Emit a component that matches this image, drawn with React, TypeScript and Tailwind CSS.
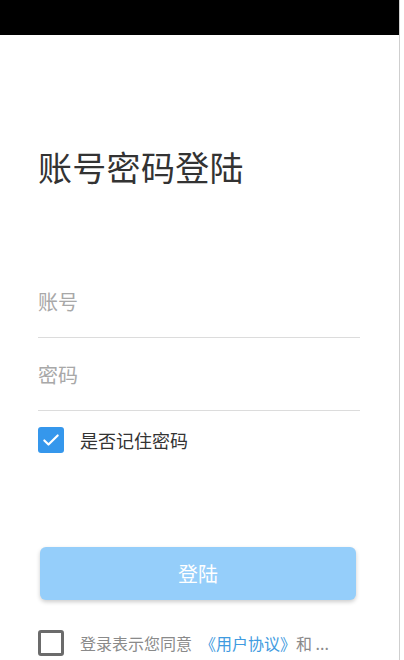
import { useState } from "react";

const FONT = "font-['Noto_Sans_CJK_SC','Noto_Sans',sans-serif]";

export default function App() {
    const [remember, setRemember] = useState(true);
    const [agree, setAgree] = useState(false);

    return (
        <div className={`w-[404px] h-[660px] bg-white overflow-hidden ${FONT}`}>
            <div className="w-[400px] h-full border-r border-[#cfcfcf] flex flex-col">
                {/* 状态栏 */}
                <div className="h-[35px] bg-black shrink-0" />

                <div className="flex flex-col pl-[38px] pr-[39px]">
                    <h1 className="mt-[112px] text-[34px] leading-[40px] text-[#333] font-normal tracking-[0.3px]">
                        账号密码登陆
                    </h1>

                    {/* 账号 */}
                    <div className="mt-[78px] h-[73px] border-b border-[#dcdcdc]">
                        <input
                            className="w-full h-full outline-none text-[20px] text-[#333] placeholder:text-[#a8a8a8] bg-transparent"
                            placeholder="账号"
                        />
                    </div>

                    {/* 密码 */}
                    <div className="h-[73px] border-b border-[#dcdcdc]">
                        <input
                            type="password"
                            className="w-full h-full outline-none text-[20px] text-[#333] placeholder:text-[#a8a8a8] bg-transparent"
                            placeholder="密码"
                        />
                    </div>

                    {/* 记住密码 */}
                    <div className="mt-[15px] flex items-center gap-[16px] h-[28px]">
                        <button
                            onClick={() => setRemember(!remember)}
                            className={`w-[26px] h-[26px] rounded-[3px] flex items-center justify-center ${remember ? "bg-[#3597ec]" : "border-[3px] border-[#6b6b6b]"}`}
                        >
                            {remember && (
                                <svg width="20" height="20" viewBox="0 0 24 24" fill="none" stroke="white" strokeWidth="2.6" strokeLinecap="round" strokeLinejoin="round">
                                    <path d="M4 12.5l5 5L20 6.5" />
                                </svg>
                            )}
                        </button>
                        <span className="text-[18px] text-[#333]">是否记住密码</span>
                    </div>

                    {/* 登陆按钮 */}
                    <button className="mt-[93px] ml-[2px] w-[316px] h-[53px] rounded-[6px] bg-[#95cefa] text-white text-[20px] shadow-[0_2px_4px_rgba(0,0,0,0.2)]">
                        登陆
                    </button>

                    {/* 协议 */}
                    <div className="mt-[29px] flex items-center gap-[16px] h-[28px]">
                        <button
                            onClick={() => setAgree(!agree)}
                            className={`w-[26px] h-[26px] rounded-[3px] shrink-0 ${agree ? "bg-[#3597ec]" : "border-[3px] border-[#6b6b6b]"}`}
                        />
                        <span className="text-[16px] text-[#8a8a8a] whitespace-nowrap">
                            登录表示您同意<span className="ml-[8px] text-[#3f9be0]">《用户协议》</span><span>和 ...</span>
                        </span>
                    </div>
                </div>
            </div>
        </div>
    );
}
